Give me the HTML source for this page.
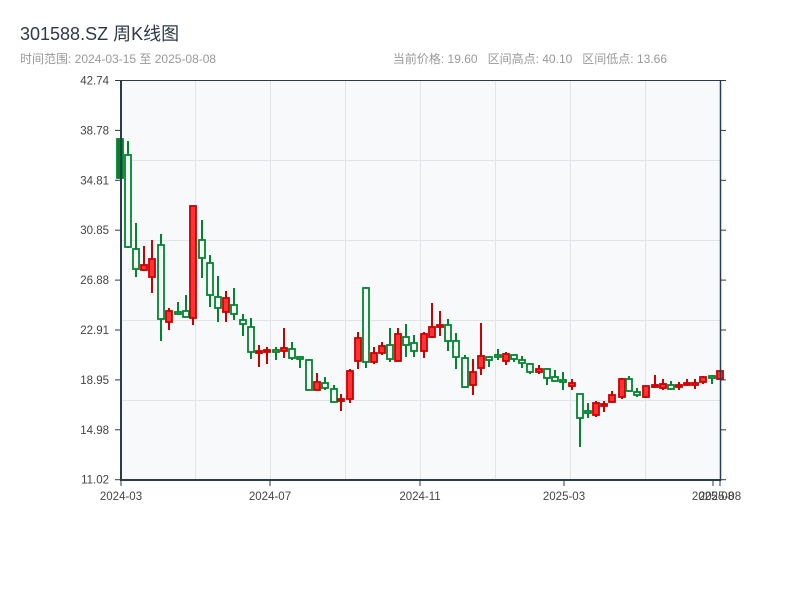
<!DOCTYPE html>
<html><head><meta charset="utf-8"><style>
body{margin:0;width:800px;height:600px;background:#fff;overflow:hidden;font-family:"Liberation Sans","Noto Sans CJK SC",sans-serif}
</style></head><body>
<svg width="800" height="600" xmlns="http://www.w3.org/2000/svg" font-family="Liberation Sans, Noto Sans CJK SC, sans-serif">
<text x="20" y="40" font-size="18" fill="#2e3a4a">301588.SZ 周K线图</text>
<text x="20" y="63" font-size="12" fill="#999">时间范围: 2024-03-15 至 2025-08-08</text>
<text x="667" y="63" font-size="12" fill="#999" text-anchor="end" style="white-space:pre" xml:space="preserve">当前价格: 19.60   区间高点: 40.10   区间低点: 13.66</text>
<rect x="121" y="80" width="599" height="400" fill="#f7f9fb"/>
<g stroke="#e1e4e8" stroke-width="1">
<line x1="195.5" y1="80" x2="195.5" y2="480"/><line x1="270.5" y1="80" x2="270.5" y2="480"/><line x1="345.5" y1="80" x2="345.5" y2="480"/><line x1="420.5" y1="80" x2="420.5" y2="480"/><line x1="495.5" y1="80" x2="495.5" y2="480"/><line x1="570.5" y1="80" x2="570.5" y2="480"/><line x1="645.5" y1="80" x2="645.5" y2="480"/>
<line x1="121" y1="160.5" x2="720" y2="160.5"/><line x1="121" y1="240.5" x2="720" y2="240.5"/><line x1="121" y1="320.5" x2="720" y2="320.5"/><line x1="121" y1="400.5" x2="720" y2="400.5"/>
</g>
<g id="c"></g>
<g stroke="#2b3a4d">
<line x1="121" y1="80.5" x2="720" y2="80.5" stroke-width="1"/>
<line x1="121" y1="80" x2="121" y2="481" stroke-width="2"/>
<line x1="120" y1="480" x2="721" y2="480" stroke-width="2"/>
<line x1="720.5" y1="80" x2="720.5" y2="481" stroke-width="1.5"/>
</g>
<g id="t" stroke="#2b3a4d" stroke-width="1"></g>
<g font-size="11.5" fill="#444" text-anchor="end" id="yl"></g>
<g font-size="11.5" fill="#444" text-anchor="middle">
<text x="121" y="500">2024-03</text><text x="270" y="500">2024-07</text><text x="420" y="500">2024-11</text><text x="564" y="500">2025-03</text><text x="713" y="500">2025-08</text><text x="720" y="500">2025-08</text>
</g>
</svg>
<script>
var d=[[120,'G',139,178,139,178],[128,'G',155,247,141,248],[136,'G',249,269,223,277],[144,'R',265,270,246,271],[152,'R',259,277,240,293],[161,'G',245,319,234,341],[169,'R',311,322,308,330],[178,'G',312,314,302,315],[186,'G',311,317,295,317],[193,'R',206,318,206,325],[202,'G',240,258,220,278],[210,'G',263,295,255,307],[218,'G',297,308,276,322],[226,'R',298,312,291,322],[234,'G',305,314,288,320],[243,'G',320,324,314,336],[251,'G',327,352,318,359],[259,'R',351,353,345,367],[267,'R',350,352,347,364],[276,'G',350,352,347,360],[284,'R',348,351,328,358],[292,'G',349,358,342,360],[300,'G',357,359,356,368],[309,'G',360,390,359,390],[317,'R',382,390,373,390],[325,'G',383,388,377,390],[334,'G',389,402,385,403],[341,'R',399,401,394,411],[350,'R',371,399,369,403],[358,'R',338,361,332,369],[366,'G',288,362,287,368],[374,'R',353,362,347,364],[382,'R',346,353,342,355],[390,'G',345,359,328,362],[398,'R',334,361,328,361],[406,'G',337,345,324,357],[414,'G',343,351,335,357],[424,'R',334,351,332,358],[432,'R',327,337,303,338],[440,'R',325,327,311,336],[448,'G',325,341,319,351],[456,'G',341,357,333,369],[465,'G',358,387,355,388],[473,'R',372,385,359,395],[481,'R',356,368,323,375],[489,'G',357,360,356,367],[498,'G',355,357,349,360],[506,'R',354,361,352,365],[514,'G',355,359,355,362],[522,'G',360,363,356,368],[530,'G',364,372,363,374],[539,'R',369,372,365,374],[547,'G',369,378,368,385],[555,'G',377,381,370,382],[563,'G',380,382,372,390],[572,'R',383,386,379,390],[580,'G',394,418,394,447],[588,'G',411,413,403,418],[596,'R',403,415,401,417],[604,'R',404,405,401,412],[612,'R',395,402,391,403],[622,'R',379,397,378,399],[629,'G',379,391,376,392],[637,'G',392,395,388,397],[646,'R',386,397,386,398],[655,'R',385,387,375,388],[663,'R',384,388,379,390],[671,'G',385,389,381,390],[679,'R',385,386,382,390],[687,'R',383,385,379,386],[695,'R',383,385,379,389],[703,'R',377,382,376,384],[712,'G',376,378,375,384],[720,'R',371,379,371,379]];
var s='';d.forEach(function(c,i){var x=c[0],g=c[1]=='G',col=g?'#00852d':'#cc0000',fill=g?(i==0?'#00852d':'#f7f9fb'):'#ff3333';
s+='<line x1="'+x+'" x2="'+x+'" y1="'+c[4]+'" y2="'+c[5]+'" stroke="'+col+'" stroke-width="2"/>';
var h=Math.max(c[3]-c[2],2);s+='<rect x="'+(x-3)+'" y="'+c[2]+'" width="6" height="'+h+'" fill="'+fill+'" stroke="'+col+'" stroke-width="1.8"/>';});
document.getElementById('c').innerHTML=s;
var yl=['42.74','38.78','34.81','30.85','26.88','22.91','18.95','14.98','11.02'],t='',l='';
for(var i=0;i<9;i++){var y=80.5+i*49.9;t+='<line x1="115" x2="121" y1="'+y+'" y2="'+y+'"/><line x1="720" x2="726" y1="'+y+'" y2="'+y+'"/>';l+='<text x="109" y="'+(y+4)+'">'+yl[i]+'</text>';}
[121,270,420,564,713,720].forEach(function(x){t+='<line x1="'+x+'" x2="'+x+'" y1="480" y2="486"/>'});
document.getElementById('t').innerHTML=t;document.getElementById('yl').innerHTML=l;
</script>
</body></html>
